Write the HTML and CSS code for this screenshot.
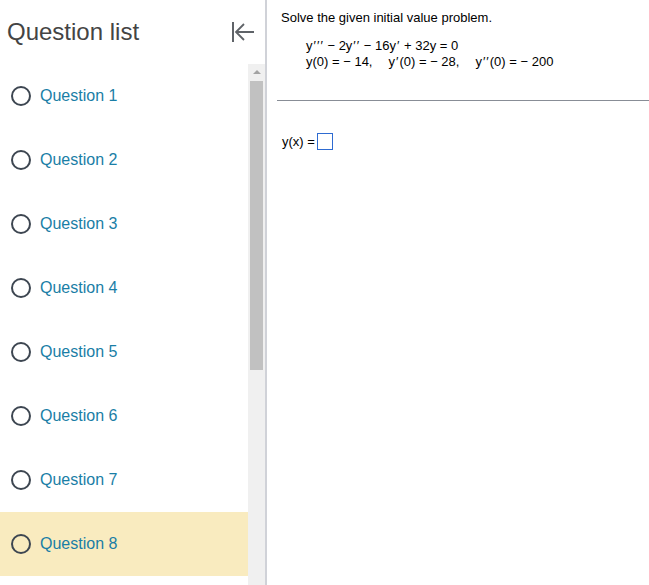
FILE: index.html
```html
<!DOCTYPE html>
<html>
<head>
<meta charset="utf-8">
<link rel="stylesheet" href="styles.css">
</head>
<body>
<div class="app">
  <aside class="side">
    <header class="side-head">
      <h1 class="title">Question list</h1>
      <svg class="collapse" width="24" height="22" viewBox="0 0 24 22">
        <path d="M2 1 V21" stroke="#5f6368" stroke-width="2" fill="none"/>
        <path d="M13 3 L5 11 L13 19 M5 11 H23" stroke="#5f6368" stroke-width="1.8" fill="none"/>
      </svg>
    </header>
    <div class="list-wrap">
      <ul class="list">
        <li class="item"><span class="radio"></span><span class="label">Question 1</span></li>
        <li class="item"><span class="radio"></span><span class="label">Question 2</span></li>
        <li class="item"><span class="radio"></span><span class="label">Question 3</span></li>
        <li class="item"><span class="radio"></span><span class="label">Question 4</span></li>
        <li class="item"><span class="radio"></span><span class="label">Question 5</span></li>
        <li class="item"><span class="radio"></span><span class="label">Question 6</span></li>
        <li class="item"><span class="radio"></span><span class="label">Question 7</span></li>
        <li class="item active"><span class="radio"></span><span class="label">Question 8</span></li>
      </ul>
      <div class="scrollbar">
        <div class="arrow"></div>
        <div class="thumb"></div>
      </div>
    </div>
  </aside>
  <main class="main">
    <p class="prompt">Solve the given initial value problem.</p>
    <div class="eqs">
      <div class="eq">y<span class="pr">′′′</span> − 2y<span class="pr">′′</span> − 16y<span class="pr">′</span> + 32y = 0</div>
      <div class="eq">y(0) = − 14,<span class="sep"></span>y<span class="pr">′</span>(0) = − 28,<span class="sep"></span>y<span class="pr">′′</span>(0) = − 200</div>
    </div>
    <hr class="rule">
    <div class="answer"><span>y(x) =</span><span class="box"></span></div>
  </main>
</div>
</body>
</html>
```
FILE: styles.css
```css
html, body {
  margin: 0;
  padding: 0;
  background: #fff;
  font-family: "Liberation Sans", Arial, sans-serif;
}
.app {
  display: flex;
  height: 585px;
  overflow: hidden;
}
.side {
  width: 265px;
  flex: none;
  border-right: 2px solid #d0d2d8;
  display: flex;
  flex-direction: column;
}
.side-head {
  height: 64px;
  flex: none;
  display: flex;
  align-items: center;
  justify-content: space-between;
  padding: 0 10px 0 7px;
}
.title {
  margin: 0;
  font-size: 24px;
  font-weight: normal;
  color: #444;
}
.collapse {
  display: block;
}
.list-wrap {
  flex: 1;
  display: flex;
  min-height: 0;
}
.list {
  list-style: none;
  margin: 0;
  padding: 0;
  flex: 1;
}
.item {
  height: 64px;
  display: flex;
  align-items: center;
  padding-left: 11px;
  gap: 9px;
}
.item.active {
  background: #f9ebbf;
}
.radio {
  width: 16px;
  height: 16px;
  border: 2px solid #3d4651;
  border-radius: 50%;
  flex: none;
}
.label {
  font-size: 16px;
  color: #1a7ea6;
}
.scrollbar {
  width: 17px;
  flex: none;
  background: #f0f0f0;
  display: flex;
  flex-direction: column;
  align-items: center;
}
.arrow {
  margin-top: 6px;
  width: 0;
  height: 0;
  border-left: 4px solid transparent;
  border-right: 4px solid transparent;
  border-bottom: 4px solid #a3a3a3;
}
.thumb {
  margin-top: 7px;
  width: 13px;
  height: 289px;
  background: #c1c1c1;
}
.main {
  flex: 1;
  padding: 0 0 0 10px;
  font-size: 13px;
  color: #000;
}
.prompt {
  margin: 10px 0 0 4px;
}
.eqs {
  margin: 13px 0 0 29px;
  line-height: 16px;
}
.pr {
  letter-spacing: 1px;
  padding-left: 1px;
}
.sep {
  display: inline-block;
  width: 16px;
}
.rule {
  margin: 30px 0 0 0;
  border: 0;
  border-top: 1px solid #888d96;
  height: 0;
}
.answer {
  margin: 32px 0 0 5px;
  display: flex;
  align-items: center;
  gap: 2px;
}
.box {
  width: 14px;
  height: 15px;
  border: 1px solid #2e6bd1;
}
```
